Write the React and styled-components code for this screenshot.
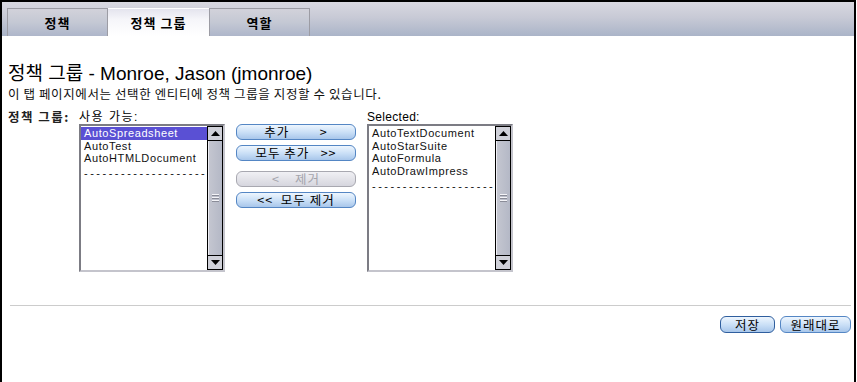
import styled, { createGlobalStyle } from 'styled-components';

const GlobalStyle = createGlobalStyle`
  html, body {
    margin: 0;
    padding: 0;
    background: #ffffff;
  }
  body {
    font-family: 'Liberation Sans', 'Noto Sans CJK KR', sans-serif;
    color: #000;
  }
`;

const Frame = styled.div`
  box-sizing: border-box;
  width: 856px;
  height: 382px;
  border-top: 2px solid #000;
  border-left: 2px solid #000;
  border-right: 2px solid #000;
  display: flex;
  flex-direction: column;
`;

const TabBar = styled.div`
  height: 34px;
  display: flex;
  align-items: flex-end;
  padding-left: 5px;
  background: linear-gradient(#d8d8e0 0%, #c8cad6 45%, #aab4c8 100%);
`;

const Tab = styled.div`
  box-sizing: border-box;
  width: 101px;
  height: 28px;
  display: flex;
  align-items: center;
  justify-content: center;
  font-family: 'Noto Sans CJK KR', sans-serif;
  font-size: 13px;
  font-weight: 700;
  letter-spacing: 1px;
  border: 1px solid ${(p) => (p.$active ? 'transparent' : '#9c9ca4')};
  border-bottom: none;
  background: ${(p) =>
    p.$active
      ? 'linear-gradient(#e4e4ee 0%, #f6f6fa 40%, #ffffff 100%)'
      : 'linear-gradient(#d2d2da 0%, #c4c8d4 50%, #aeb6ca 100%)'};
`;

const Content = styled.div`
  padding: 27px 3px 0 6px;
  display: flex;
  flex-direction: column;
`;

const Title = styled.h1`
  margin: 0;
  font-family: 'Liberation Sans', 'Noto Sans CJK KR', sans-serif;
  font-size: 19px;
  font-weight: 400;
  line-height: 21px;
`;

const Subtitle = styled.p`
  margin: 3px 0 0;
  font-family: 'Noto Sans CJK KR', sans-serif;
  font-size: 12.5px;
  letter-spacing: 0.6px;
  line-height: 14px;
  color: #111;
`;

const FieldRow = styled.div`
  display: flex;
  margin-top: 9px;
`;

const FieldLabel = styled.div`
  width: 71px;
  font-family: 'Noto Sans CJK KR', sans-serif;
  font-size: 12.5px;
  font-weight: 700;
  letter-spacing: 1.5px;
  line-height: 14px;
  color: #222;
`;

const Column = styled.div`
  display: flex;
  flex-direction: column;
`;

const ColLabel = styled.div`
  font-family: 'Liberation Sans', 'Noto Sans CJK KR', sans-serif;
  font-size: 12px;
  letter-spacing: ${(p) => (p.$wide ? '1.5px' : '0.3px')};
  line-height: 14px;
`;

const ListBox = styled.div`
  box-sizing: border-box;
  width: 146px;
  height: 148px;
  display: flex;
  border: 2px solid;
  border-color: #7c7c84 #c4c4cc #c4c4cc #7c7c84;
  background: #fff;
`;

const Items = styled.div`
  flex: 1;
  display: flex;
  flex-direction: column;
  padding-top: 1px;
  overflow: hidden;
`;

const Item = styled.div`
  font-family: 'Liberation Sans', sans-serif;
  font-size: 11px;
  letter-spacing: 0.6px;
  line-height: 12.7px;
  padding-left: 3px;
  white-space: nowrap;
  overflow: hidden;
  background: ${(p) => (p.$selected ? '#5a50d4' : 'transparent')};
  color: ${(p) => (p.$selected ? '#fff' : '#111')};
`;

const Dashes = styled(Item)`
  margin-top: 2px;
  letter-spacing: 2.5px;
`;

const Scroll = styled.div`
  width: 15px;
  display: flex;
  flex-direction: column;
  border-left: 1px solid #000;
  background: #b8bcc8;
`;

const ArrowBtn = styled.div`
  box-sizing: border-box;
  height: 15px;
  border: 1px solid #000;
  border-left: none;
  background: #cfd0d8;
  display: flex;
  align-items: center;
  justify-content: center;
`;

const Thumb = styled.div`
  flex: 1;
  border-right: 1px solid #000;
  border-left: 1px solid #eeeef4;
  background: linear-gradient(90deg, #c4c6d0, #b4b8c6);
  display: flex;
  align-items: center;
  justify-content: center;
`;

const Grip = styled.div`
  width: 7px;
  height: 9px;
  background: repeating-linear-gradient(#f4f4f8 0 1px, #8a8c98 1px 2px, transparent 2px 3px);
`;

const ButtonCol = styled.div`
  width: 120px;
  margin: 14px 11px 0;
  display: flex;
  flex-direction: column;
`;

const Pill = styled.button`
  box-sizing: border-box;
  height: ${(p) => p.$h || 16}px;
  width: ${(p) => (p.$w ? `${p.$w}px` : '100%')};
  margin-top: ${(p) => p.$mt || 0}px;
  padding: 0;
  border: 1px solid ${(p) => (p.disabled ? '#a8a8b0' : p.$primary ? '#2f5e9e' : '#5486c4')};
  border-radius: 6px;
  background: ${(p) =>
    p.disabled
      ? 'linear-gradient(#f0f0f4, #d6d6de)'
      : 'linear-gradient(#eef6fe 0%, #c8def6 55%, #a8c6ea 100%)'};
  color: ${(p) => (p.disabled ? '#a4a4ac' : '#000')};
  font-family: 'Noto Sans CJK KR', sans-serif;
  font-size: 12.5px;
  letter-spacing: 1px;
  line-height: 14px;
  white-space: pre;
  display: flex;
  align-items: center;
  justify-content: center;
`;

const Divider = styled.hr`
  margin: 33px 0 0 2px;
  width: 841px;
  border: none;
  border-top: 1px solid #cccccc;
`;

const Footer = styled.div`
  display: flex;
  justify-content: flex-end;
  gap: 5px;
  margin-top: 10px;
`;

function Arrow({ up }) {
  return (
    <svg width="9" height="5" viewBox="0 0 9 5">
      <path d={up ? 'M0 5 L4.5 0 L9 5 Z' : 'M0 0 L4.5 5 L9 0 Z'} fill="#000" />
    </svg>
  );
}

function List({ items, selected }) {
  return (
    <ListBox>
      <Items>
        {items.map((it) => (
          <Item key={it} $selected={it === selected}>
            {it}
          </Item>
        ))}
        <Dashes>--------------------</Dashes>
      </Items>
      <Scroll>
        <ArrowBtn>
          <Arrow up />
        </ArrowBtn>
        <Thumb>
          <Grip />
        </Thumb>
        <ArrowBtn>
          <Arrow />
        </ArrowBtn>
      </Scroll>
    </ListBox>
  );
}

export default function App() {
  const available = ['AutoSpreadsheet', 'AutoTest', 'AutoHTMLDocument'];
  const chosen = ['AutoTextDocument', 'AutoStarSuite', 'AutoFormula', 'AutoDrawImpress'];

  return (
    <>
      <GlobalStyle />
      <Frame>
        <TabBar>
          <Tab>정책</Tab>
          <Tab $active>정책 그룹</Tab>
          <Tab>역할</Tab>
        </TabBar>
        <Content>
          <Title>정책 그룹 - Monroe, Jason (jmonroe)</Title>
          <Subtitle>이 탭 페이지에서는 선택한 엔티티에 정책 그룹을 지정할 수 있습니다.</Subtitle>
          <FieldRow>
            <FieldLabel>정책 그룹:</FieldLabel>
            <Column>
              <ColLabel $wide>사용 가능:</ColLabel>
              <List items={available} selected="AutoSpreadsheet" />
            </Column>
            <ButtonCol>
              <Pill>{'추가        >'}</Pill>
              <Pill $mt={5}>{'모두 추가   >>'}</Pill>
              <Pill $mt={10} disabled>{'<    제거'}</Pill>
              <Pill $mt={5}>{'<<  모두 제거'}</Pill>
            </ButtonCol>
            <Column>
              <ColLabel>Selected:</ColLabel>
              <List items={chosen} />
            </Column>
          </FieldRow>
          <Divider />
          <Footer>
            <Pill $primary $w={55} $h={17}>저장</Pill>
            <Pill $w={71} $h={17}>원래대로</Pill>
          </Footer>
        </Content>
      </Frame>
    </>
  );
}
